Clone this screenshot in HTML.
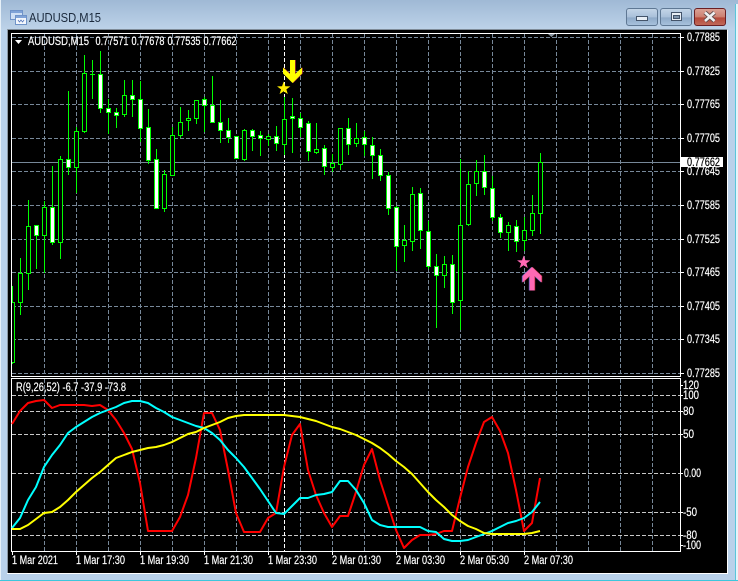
<!DOCTYPE html>
<html><head><meta charset="utf-8"><title>AUDUSD,M15</title>
<style>
html,body{margin:0;padding:0;background:#b9d1ea}
svg{display:block}
text{font-family:"Liberation Sans",sans-serif;font-size:11.5px;fill:#fff;stroke:#fff;stroke-width:.18px}
</style></head><body>
<svg xmlns="http://www.w3.org/2000/svg" width="738" height="581" viewBox="0 0 738 581">
<defs>
<linearGradient id="tb" x1="0" y1="0" x2="0" y2="1"><stop offset="0" stop-color="#9fb9d5"/><stop offset="1" stop-color="#bdd3e9"/></linearGradient>
<linearGradient id="btn" x1="0" y1="0" x2="0" y2="1"><stop offset="0" stop-color="#c5d6e8"/><stop offset=".5" stop-color="#a9c0da"/><stop offset=".55" stop-color="#8faac8"/><stop offset="1" stop-color="#a9c3de"/></linearGradient>
<linearGradient id="cls" x1="0" y1="0" x2="0" y2="1"><stop offset="0" stop-color="#dca498"/><stop offset=".5" stop-color="#cc7f70"/><stop offset=".55" stop-color="#b5493a"/><stop offset="1" stop-color="#c06a5a"/></linearGradient>
<clipPath id="plot"><rect x="12" y="34" width="668" height="343"/></clipPath>
</defs>
<rect width="738" height="581" fill="#b9d1ea"/>
<rect width="738" height="30" fill="url(#tb)"/>
<rect x="0" y="0" width="1" height="581" fill="#e6f0f8"/>
<rect x="735" y="4" width="1" height="577" fill="#59c6da"/>
<rect x="736" y="4" width="2" height="577" fill="#e8f2f8"/>
<rect x="0" y="580" width="738" height="1" fill="#3cc6dc"/>
<rect x="7" y="29" width="720" height="1" fill="#7f8c99"/>
<rect x="7" y="29" width="1" height="544" fill="#8a96a2"/>
<rect x="8" y="30" width="719" height="543" fill="#000"/>
<rect x="7" y="573" width="721" height="1" fill="#fff"/>
<rect x="727" y="30" width="1" height="544" fill="#fff"/>

<!-- title -->
<g shape-rendering="crispEdges">
<rect x="10.5" y="10.5" width="12" height="9" fill="#cfe0f5" stroke="#6f93c8"/>
<rect x="15.5" y="15.5" width="11" height="9" fill="#f3f7fc" stroke="#6f93c8"/>
<rect x="11" y="11" width="11" height="2" fill="#7fa3d8"/>
<rect x="16" y="16" width="10" height="2" fill="#7fa3d8"/>
</g>
<path d="M18 20l1.5 2 1.5-2 1.5 2 1.5-2" fill="none" stroke="#5577bb" stroke-width=".8"/>
<text x="29" y="22" style="font-size:13px;fill:#1b2a3d;stroke:none" textLength="72" lengthAdjust="spacingAndGlyphs">AUDUSD,M15</text>

<!-- window buttons -->
<rect x="626.5" y="8.5" width="31" height="17" rx="2.5" fill="url(#btn)" stroke="#5f7894"/>
<rect x="636.5" y="16.5" width="11" height="4" fill="#e8eef5" stroke="#44546a"/>
<rect x="660.5" y="8.5" width="31" height="17" rx="2.5" fill="url(#btn)" stroke="#5f7894"/>
<rect x="671.5" y="12.5" width="10" height="8" fill="#e8eef5" stroke="#44546a"/><rect x="673.5" y="15.5" width="6" height="3" fill="#7f95ad" stroke="#44546a"/>
<rect x="694.5" y="8.5" width="31" height="17" rx="2.5" fill="url(#cls)" stroke="#6b2024"/>
<path d="M705 12.5l9.5 8.5M714.5 12.5l-9.5 8.5" stroke="#5e4a4a" stroke-width="4.4" fill="none"/>
<path d="M705 12.5l9.5 8.5M714.5 12.5l-9.5 8.5" stroke="#eef0f2" stroke-width="2.6" fill="none"/>

<!-- frames -->
<g shape-rendering="crispEdges">
<path d="M680.5 33.5H11.5V376.5H680.5ZM680.5 378.5H11.5V551.5H680.5Z" fill="none" stroke="#fff"/>
<!-- grid -->
<g stroke="#778899" fill="none" stroke-dasharray="4 2">
<path d="M12 37.5H680M12 71.5H680M12 104.5H680M12 138.5H680M12 171.5H680M12 205.5H680M12 239.5H680M12 272.5H680M12 306.5H680M12 339.5H680M12 373.5H680"/>
<path d="M44.5 34V376M76.5 34V376M108.5 34V376M140.5 34V376M172.5 34V376M204.5 34V376M236.5 34V376M268.5 34V376M300.5 34V376M332.5 34V376M364.5 34V376M396.5 34V376M428.5 34V376M460.5 34V376M492.5 34V376M524.5 34V376M556.5 34V376M588.5 34V376M620.5 34V376M652.5 34V376"/>
<path d="M44.5 379V551M76.5 379V551M108.5 379V551M140.5 379V551M172.5 379V551M204.5 379V551M236.5 379V551M268.5 379V551M300.5 379V551M332.5 379V551M364.5 379V551M396.5 379V551M428.5 379V551M460.5 379V551M492.5 379V551M524.5 379V551M556.5 379V551M588.5 379V551M620.5 379V551M652.5 379V551"/>
</g>
<path d="M12 395.5H680M12 411.5H680M12 434.5H680M12 473.5H680M12 512.5H680M12 535.5H680" stroke="#c8c8c8" fill="none" stroke-dasharray="4 2"/>
<path d="M284.5 34V551" stroke="#fff" fill="none" stroke-dasharray="4 2"/>
<path d="M12 162.5H680" stroke="#778899" fill="none"/>
<!-- ticks -->
<path d="M680 37.5h4M680 71.5h4M680 104.5h4M680 138.5h4M680 171.5h4M680 205.5h4M680 239.5h4M680 272.5h4M680 306.5h4M680 339.5h4M680 373.5h4M680 385.5h3M680 395.5h3M680 411.5h3M680 434.5h3M680 473.5h3M680 512.5h3M680 535.5h3M680 545.5h3M12.5 551v4M76.5 551v4M140.5 551v4M204.5 551v4M268.5 551v4M332.5 551v4M396.5 551v4M460.5 551v4M524.5 551v4" stroke="#fff" fill="none"/>
<!-- candles -->
<g clip-path="url(#plot)">
<g fill="none" stroke="#00ff00">
<path d="M12.5 286V364M20.5 258V315M28.5 200V290M36.5 225V269M44.5 201V273M52.5 166V245M60.5 156V259M68.5 91V175M76.5 127V193M84.5 55V133M92.5 60V99M100.5 51V113M108.5 99V134M116.5 108V128M124.5 80V117M132.5 80V117M140.5 81V142M148.5 109V164M156.5 149V208M164.5 170V212M172.5 127V176M180.5 107V138M188.5 110V131M196.5 100V124M204.5 97V132M212.5 76V123M220.5 100V143M228.5 118V143M236.5 136V158M244.5 129V161M252.5 129V151M260.5 131V156M268.5 134V146M276.5 126V151M284.5 97V155M292.5 98V153M300.5 113V137M308.5 121V161M316.5 123V154M324.5 145V175M332.5 154V172M340.5 128V170M348.5 118V155M356.5 123V147M364.5 131V156M372.5 137V179M380.5 149V181M388.5 172V215M396.5 206V271M404.5 225V262M412.5 187V251M420.5 188V249M428.5 221V269M436.5 254V328M444.5 256V288M452.5 255V314M460.5 159V330M468.5 171V226M476.5 160V196M484.5 155V195M492.5 176V221M500.5 214V238M508.5 222V251M516.5 220V252M524.5 217V251M532.5 195V236M540.5 153V234"/>
<path d="M90 74.5h5"/>
</g>
<path fill="#000" stroke="#00ff00" d="M10.5 302.5h4V362.5h-4zM18.5 273.5h4V302.5h-4zM26.5 226.5h4V273.5h-4zM42.5 207.5h4V235.5h-4zM58.5 159.5h4V242.5h-4zM74.5 131.5h4V167.5h-4zM82.5 73.5h4V131.5h-4zM122.5 95.5h4V114.5h-4zM162.5 174.5h4V208.5h-4zM170.5 135.5h4V175.5h-4zM178.5 122.5h4V135.5h-4zM186.5 118.5h4V120.5h-4zM194.5 100.5h4V118.5h-4zM242.5 130.5h4V159.5h-4zM266.5 136.5h4V139.5h-4zM282.5 119.5h4V144.5h-4zM314.5 149.5h4V152.5h-4zM330.5 163.5h4V167.5h-4zM338.5 128.5h4V164.5h-4zM354.5 138.5h4V143.5h-4zM402.5 240.5h4V245.5h-4zM410.5 194.5h4V241.5h-4zM442.5 264.5h4V275.5h-4zM458.5 225.5h4V300.5h-4zM466.5 184.5h4V224.5h-4zM474.5 171.5h4V183.5h-4zM506.5 225.5h4V232.5h-4zM522.5 230.5h4V240.5h-4zM530.5 213.5h4V230.5h-4zM538.5 162.5h4V213.5h-4z"/>
<path fill="#fff" stroke="#00ff00" d="M34.5 225.5h4V235.5h-4zM50.5 207.5h4V242.5h-4zM66.5 159.5h4V167.5h-4zM98.5 74.5h4V108.5h-4zM106.5 108.5h4V112.5h-4zM114.5 112.5h4V115.5h-4zM130.5 95.5h4V99.5h-4zM138.5 99.5h4V128.5h-4zM146.5 127.5h4V160.5h-4zM154.5 159.5h4V208.5h-4zM202.5 99.5h4V105.5h-4zM210.5 105.5h4V122.5h-4zM218.5 122.5h4V130.5h-4zM226.5 130.5h4V137.5h-4zM234.5 136.5h4V158.5h-4zM250.5 130.5h4V136.5h-4zM258.5 135.5h4V138.5h-4zM274.5 136.5h4V143.5h-4zM290.5 116.5h4V118.5h-4zM298.5 118.5h4V127.5h-4zM306.5 123.5h4V151.5h-4zM322.5 148.5h4V166.5h-4zM346.5 128.5h4V144.5h-4zM362.5 137.5h4V144.5h-4zM370.5 145.5h4V155.5h-4zM378.5 155.5h4V175.5h-4zM386.5 175.5h4V208.5h-4zM394.5 207.5h4V246.5h-4zM418.5 193.5h4V230.5h-4zM426.5 231.5h4V266.5h-4zM434.5 266.5h4V275.5h-4zM450.5 264.5h4V302.5h-4zM482.5 171.5h4V187.5h-4zM490.5 188.5h4V217.5h-4zM498.5 217.5h4V232.5h-4zM514.5 226.5h4V241.5h-4z"/>
</g>
</g>

<!-- markers -->
<path d="M290 60H295V74L302 67.5V73.5L292.5 83L283 73.5V67.5L290 74Z" fill="#c03040" transform="translate(.7 0)"/>
<path d="M290 60H295V74L302 67.5V73.5L292.5 83L283 73.5V67.5L290 74Z" fill="#ffff00"/>
<polygon transform="translate(283.7 88.5)" fill="#ffee00" points="0,-7 1.65,-2.27 6.66,-2.16 2.66,.87 4.11,5.66 0,2.8 -4.11,5.66 -2.66,.87 -6.66,-2.16 -1.65,-2.27"/>
<path d="M532 267L541.5 276V282.5L534.5 276V290.5H529.5V276L522.5 282.5V276Z" fill="#4060c0" transform="translate(-.7 0)"/>
<path d="M532 267L541.5 276V282.5L534.5 276V290.5H529.5V276L522.5 282.5V276Z" fill="#c03040" transform="translate(.7 0)"/>
<path d="M532 267L541.5 276V282.5L534.5 276V290.5H529.5V276L522.5 282.5V276Z" fill="#ff69b4"/>
<polygon transform="translate(523.7 262.5)" fill="#ff69b4" points="0,-7 1.65,-2.27 6.66,-2.16 2.66,.87 4.11,5.66 0,2.8 -4.11,5.66 -2.66,.87 -6.66,-2.16 -1.65,-2.27"/>
<path d="M548 34h7l-3.5 3z" fill="#8a96a2"/>

<!-- indicator lines -->
<g fill="none" stroke-width="2" stroke-linejoin="round">
<polyline stroke="#ff0000" points="12,424 20,411 28,403 36,401 44,400 52,408 60,405 68,405 76,405 84,405 92,406 100,405 108,410 116,420 124,433 132,449 140,483 148,531 156,531 164,531 172,531 180,517 188,495 196,458 204,413 212,413 220,430 228,470 236,513 244,532 252,532 260,532 268,518 276,513 284,467 292,435 300,424 308,470 316,495 324,513 332,527 340,516 348,516 356,492 364,465 372,449 380,480 388,505 396,530 404,548 412,540 420,535 428,535 436,534 444,531 452,531 460,498 468,467 476,443 484,422 492,417 500,431 508,453 516,490 524,531 532,523 540,478"/>
<polyline stroke="#00ffff" points="12,528 20,518 28,500 36,487 44,467 52,455 60,445 68,433 76,427 84,422 92,417 100,413 108,410 116,407 124,403 132,401 140,401 148,403 156,408 164,412 172,417 180,420 188,423 196,426 204,428 212,433 220,440 228,450 236,458 244,467 252,478 260,489 268,501 276,513 284,514 292,506 300,498 308,498 316,495 324,494 332,492 340,481 348,481 356,490 364,503 372,520 380,525 388,527 396,527 404,527 412,527 420,527 428,531 436,532 444,539 452,541 460,541 468,540 476,537 484,534 492,531 500,527 508,523 516,521 524,518 532,512 540,502"/>
<polyline stroke="#ffff00" points="12,529 20,529 28,525 36,519 44,513 52,512 60,507 68,500 76,492 84,485 92,478 100,472 108,465 116,458 124,455 132,452 140,450 148,448 156,447 164,445 172,442 180,438 188,434 196,432 204,428 212,425 220,422 228,418 236,416 244,415 252,415 260,415 268,415 276,415 284,415 292,416 300,417 308,419 316,421 324,424 332,427 340,429 348,432 356,435 364,439 372,443 380,448 388,454 396,461 404,467 412,474 420,483 428,492 436,500 444,507 452,515 460,521 468,526 476,529 484,533 492,534 500,534 508,534 516,534 524,534 532,533 540,531"/>
</g>

<!-- header text -->
<path d="M15 40h7l-3.5 4z" fill="#fff"/>
<text x="28" y="45" textLength="61" lengthAdjust="spacingAndGlyphs">AUDUSD,M15</text>
<text x="95.5" y="45" textLength="33" lengthAdjust="spacingAndGlyphs">0.77571</text>
<text x="131.5" y="45" textLength="33" lengthAdjust="spacingAndGlyphs">0.77678</text>
<text x="167.5" y="45" textLength="33" lengthAdjust="spacingAndGlyphs">0.77535</text>
<text x="203.5" y="45" textLength="33" lengthAdjust="spacingAndGlyphs">0.77662</text>
<text x="16" y="391" textLength="110" lengthAdjust="spacingAndGlyphs">R(9,26,52) -6.7 -37.9 -73.8</text>

<!-- price axis -->
<text x="687" y="41" textLength="33" lengthAdjust="spacingAndGlyphs">0.77885</text>
<text x="687" y="75" textLength="33" lengthAdjust="spacingAndGlyphs">0.77825</text>
<text x="687" y="108" textLength="33" lengthAdjust="spacingAndGlyphs">0.77765</text>
<text x="687" y="142" textLength="33" lengthAdjust="spacingAndGlyphs">0.77705</text>
<text x="687" y="175" textLength="33" lengthAdjust="spacingAndGlyphs">0.77645</text>
<text x="687" y="209" textLength="33" lengthAdjust="spacingAndGlyphs">0.77585</text>
<text x="687" y="243" textLength="33" lengthAdjust="spacingAndGlyphs">0.77525</text>
<text x="687" y="276" textLength="33" lengthAdjust="spacingAndGlyphs">0.77465</text>
<text x="687" y="310" textLength="33" lengthAdjust="spacingAndGlyphs">0.77405</text>
<text x="687" y="343" textLength="33" lengthAdjust="spacingAndGlyphs">0.77345</text>
<text x="687" y="377" textLength="33" lengthAdjust="spacingAndGlyphs">0.77285</text>
<rect x="681" y="157" width="42" height="10" fill="#fff"/>
<text x="687" y="166" style="fill:#000;stroke:#000" textLength="33" lengthAdjust="spacingAndGlyphs">0.77662</text>

<!-- indicator axis -->
<text x="683" y="389" textLength="16" lengthAdjust="spacingAndGlyphs">120</text>
<text x="683" y="399" textLength="16" lengthAdjust="spacingAndGlyphs">100</text>
<text x="683" y="415" textLength="11" lengthAdjust="spacingAndGlyphs">80</text>
<text x="683" y="438" textLength="11" lengthAdjust="spacingAndGlyphs">50</text>
<text x="684" y="477" textLength="17" lengthAdjust="spacingAndGlyphs">0.00</text>
<text x="683" y="516" textLength="14" lengthAdjust="spacingAndGlyphs">-50</text>
<text x="683" y="539" textLength="14" lengthAdjust="spacingAndGlyphs">-80</text>
<text x="683" y="549" textLength="18" lengthAdjust="spacingAndGlyphs">-100</text>

<!-- time axis -->
<text x="12" y="564" textLength="46" lengthAdjust="spacingAndGlyphs">1 Mar 2021</text>
<text x="76" y="564" textLength="49" lengthAdjust="spacingAndGlyphs">1 Mar 17:30</text>
<text x="140" y="564" textLength="49" lengthAdjust="spacingAndGlyphs">1 Mar 19:30</text>
<text x="204" y="564" textLength="49" lengthAdjust="spacingAndGlyphs">1 Mar 21:30</text>
<text x="268" y="564" textLength="49" lengthAdjust="spacingAndGlyphs">1 Mar 23:30</text>
<text x="332" y="564" textLength="49" lengthAdjust="spacingAndGlyphs">2 Mar 01:30</text>
<text x="396" y="564" textLength="49" lengthAdjust="spacingAndGlyphs">2 Mar 03:30</text>
<text x="460" y="564" textLength="49" lengthAdjust="spacingAndGlyphs">2 Mar 05:30</text>
<text x="524" y="564" textLength="49" lengthAdjust="spacingAndGlyphs">2 Mar 07:30</text>
</svg>
</body></html>
